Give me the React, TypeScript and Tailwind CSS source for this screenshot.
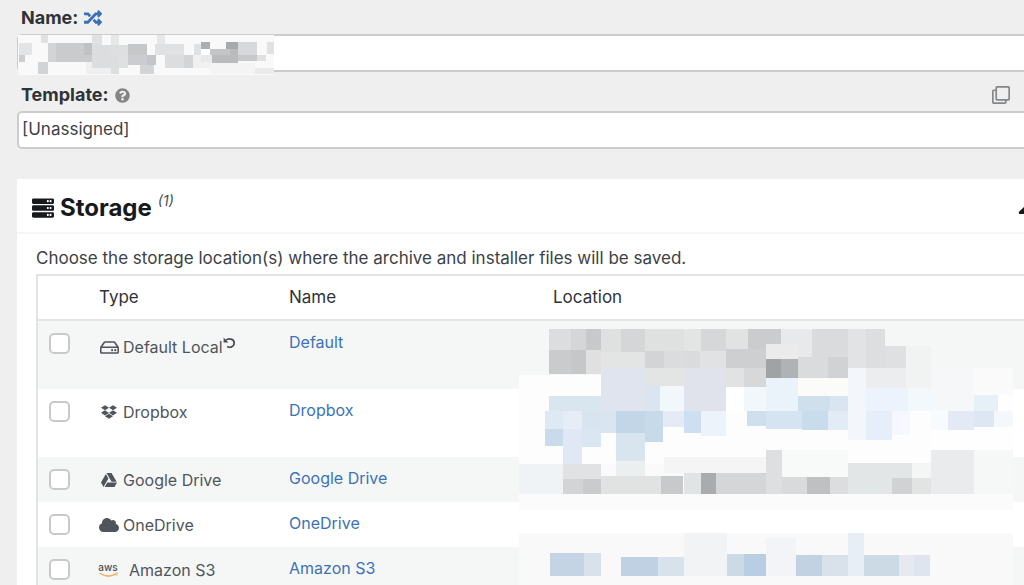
import React from 'react';
import {
  FaRandom,
  FaQuestionCircle,
  FaRegClone,
  FaServer,
  FaCaretUp,
  FaRegHdd,
  FaDropbox,
  FaGoogleDrive,
  FaCloud,
} from 'react-icons/fa';

type Block = [x: number, y: number, width: number, height: number, fill: string];

interface StorageItem {
  id: string;
  type: string;
  name: string;
  icon: React.ReactNode;
  tall?: boolean;
  isDefault?: boolean;
}

const AwsIcon: React.FC = () => (
  <svg viewBox="0 0 20 18" className="w-5 h-[18px] overflow-visible" aria-hidden="true">
    <text x="9" y="10" textAnchor="middle" fontSize="10" fontWeight="500" fill="#4a5159" fontFamily="Inter, sans-serif">
      aws
    </text>
    <path d="M1 12.4 Q9 17.4 16.5 13.2" fill="none" stroke="#f2ae70" strokeWidth="1.5" strokeLinecap="round" />
    <path d="M15.7 12.1 L18.4 12.1 L17.7 14.8" fill="none" stroke="#f2ae70" strokeWidth="1" />
  </svg>
);

const UndoIcon: React.FC = () => (
  <svg viewBox="0 0 13 12" className="w-[13px] h-3" aria-hidden="true">
    <path d="M3 3.2 C5 1.2 11.2 1.4 11.2 5.8 C11.2 10.2 6.6 11 4 9.6" fill="none" stroke="#4a4f55" strokeWidth="1.7" />
    <path d="M0.6 0.6 V5.4 H5.4 Z" fill="#4a4f55" />
  </svg>
);

const storages: StorageItem[] = [
  { id: 'local', type: 'Default Local', name: 'Default', icon: <FaRegHdd className="w-[19px] h-[17px]" />, tall: true, isDefault: true },
  { id: 'dropbox', type: 'Dropbox', name: 'Dropbox', icon: <FaDropbox className="w-4 h-4" />, tall: true },
  { id: 'gdrive', type: 'Google Drive', name: 'Google Drive', icon: <FaGoogleDrive className="w-4 h-4" /> },
  { id: 'onedrive', type: 'OneDrive', name: 'OneDrive', icon: <FaCloud className="w-5 h-4" /> },
  { id: 's3', type: 'Amazon S3', name: 'Amazon S3', icon: <AwsIcon /> },
];

// Obscured package name
const nameBlocks: Block[] = [
  [0, 0, 256, 40, '#f9f9f9'], [30, 8, 44, 19, '#d2d4d5'], [38, 8, 28, 19, '#c9cbcd'], [66, 8, 8, 12, '#bfc1c3'],
  [66, 20, 8, 7, '#c9cbcd'], [1, 8, 13, 12, '#e3e4e5'], [1, 20, 6, 7, '#cccecf'], [23, 0, 7, 8, '#e0e1e2'],
  [20, 27, 10, 12, '#d2d3d5'], [68, 27, 25, 12, '#efefef'], [74, 0, 10, 10, '#e0e1e2'], [74, 10, 19, 23, '#dcddde'],
  [93, 0, 8, 10, '#e6e7e7'], [93, 10, 17, 10, '#dedfe0'], [93, 20, 8, 19, '#dddede'], [101, 20, 9, 13, '#e0e0e1'],
  [110, 9, 19, 11, '#c5c7c9'], [110, 20, 19, 10, '#cbccd0'], [129, 20, 9, 10, '#c3c5c9'], [122, 30, 14, 9, '#d3d4d6'],
  [139, 0, 8, 9, '#e6e7e8'], [137, 9, 29, 11, '#e0e1e2'], [147, 20, 19, 13, '#dcddde'], [166, 20, 9, 13, '#d2d4d5'],
  [176, 9, 7, 11, '#e0e1e2'], [175, 20, 19, 13, '#f0f0f0'], [183, 7, 9, 7, '#abadaf'], [183, 14, 9, 6, '#ffffff'],
  [183, 20, 11, 7, '#e8e9e9'], [192, 14, 20, 6, '#c3c5c6'], [194, 20, 26, 8, '#b9bbbd'], [208, 7, 12, 7, '#a7aaab'],
  [212, 14, 8, 6, '#b8babb'], [220, 7, 19, 13, '#d6d9db'], [220, 20, 19, 6, '#c6c8c9'], [239, 20, 9, 6, '#dfe1e1'],
  [249, 7, 7, 12, '#e0e2e3'], [192, 28, 45, 11, '#f4f4f4'], [237, 33, 19, 6, '#eaeaea'],
];

// Obscured locations, measured from the table's first data row
const locationBlocks: Block[] = [
  [0, 46, 412, 89, '#fdfdfd'], [0, 165, 494, 20, '#fbfbfb'], [0, 181, 494, 23, '#ffffff'],
  [412, 59, 82, 76, '#fefefe'], [329, 39, 126, 43, '#f5f7f9'],
  // first line
  [30, 0, 22, 21, '#dcddde'], [52, 0, 15, 21, '#d5d6d7'], [67, 0, 15, 21, '#c8c9cb'], [82, 0, 20, 23, '#dfe0e0'],
  [102, 0, 24, 23, '#d5d6d7'], [126, 0, 39, 22, '#dfe0e0'], [165, 0, 17, 22, '#e3e4e4'], [182, 0, 25, 22, '#d5d7d8'],
  [207, 0, 22, 20, '#e1e3e3'], [229, 0, 33, 39, '#cbccce'], [30, 21, 22, 24, '#cacbcc'], [52, 21, 15, 24, '#c5c7c9'],
  [67, 21, 15, 24, '#e0e0e1'], [82, 23, 44, 16, '#e3e4e4'], [126, 22, 19, 17, '#d3d4d6'], [145, 22, 20, 17, '#dadcdd'],
  [165, 22, 16, 17, '#d9dbdd'], [181, 22, 26, 17, '#e1e2e3'], [207, 20, 40, 19, '#cecfd1'],
  [262, 0, 31, 28, '#e8e9ea'], [293, 0, 36, 39, '#dadbdd'], [329, 0, 18, 39, '#e1e3e4'], [347, 0, 19, 39, '#dddedf'],
  [366, 17, 21, 22, '#dfe0e2'], [387, 17, 25, 42, '#f1f3f3'], [247, 15, 32, 15, '#ebebec'], [247, 30, 15, 19, '#a0a3a6'],
  [262, 30, 17, 19, '#b0b3b5'], [279, 28, 30, 21, '#d9dbdd'], [309, 28, 20, 21, '#d0d2d4'],
  [82, 39, 44, 43, '#e0e4ee'], [126, 39, 39, 18, '#e3e4e4'], [165, 39, 42, 43, '#e0e3ec'], [207, 39, 18, 19, '#e1e3e3'],
  [225, 39, 22, 19, '#d7d8da'], [347, 39, 40, 20, '#ebedef'], [455, 39, 39, 27, '#fafafa'],
  // second line
  [126, 57, 15, 25, '#dae5f1'], [141, 57, 24, 25, '#f2f7fc'], [207, 58, 18, 24, '#ffffff'], [225, 58, 22, 24, '#f2f7fc'],
  [30, 67, 52, 15, '#d9e6ef'], [247, 49, 32, 33, '#eaf2fa'], [279, 49, 50, 18, '#fbfbfa'], [279, 67, 32, 15, '#cfdfec'],
  [311, 67, 18, 15, '#d9e6f1'], [329, 39, 18, 72, '#f3f6fb'], [347, 59, 42, 23, '#ecf3fc'], [389, 59, 23, 23, '#f2f8fc'],
  [455, 66, 24, 16, '#e6f0f7'], [26, 82, 18, 18, '#dfe9f4'], [44, 82, 19, 18, '#e6edf7'], [63, 82, 19, 18, '#d8e5f0'],
  [82, 82, 15, 22, '#d9e5f1'], [97, 82, 29, 22, '#c2d6e8'], [126, 82, 18, 31, '#c7daea'], [144, 82, 21, 16, '#e4ebf5'],
  [165, 82, 17, 22, '#cddff0'], [182, 82, 25, 25, '#edf3fa'], [228, 82, 19, 15, '#d0dfee'], [247, 82, 36, 18, '#d6e3f0'],
  [283, 82, 26, 19, '#c9dcec'], [309, 82, 20, 19, '#e1ecf7'], [347, 82, 26, 29, '#e6eefa'], [373, 82, 18, 24, '#f5f9ff'],
  [412, 82, 17, 19, '#f7fbff'], [429, 82, 26, 19, '#e3eaf5'], [455, 82, 20, 16, '#dce7f3'], [475, 82, 19, 16, '#f4f8fc'],
  [26, 100, 18, 17, '#c9daea'], [44, 100, 19, 35, '#dfe8f4'], [63, 100, 19, 18, '#dbe6f3'], [97, 104, 29, 28, '#d8e5ef'],
  // third line
  [0, 135, 44, 30, '#f0f3f5'], [44, 135, 38, 15, '#e1e2e3'], [44, 150, 20, 15, '#d2d4d6'], [64, 150, 18, 15, '#c9cbcd'],
  [82, 135, 165, 30, '#fafafa'], [97, 132, 29, 15, '#ecefef'], [82, 147, 60, 18, '#e1e3e3'], [145, 128, 102, 16, '#f5f5f5'],
  [142, 147, 22, 18, '#c7c9ca'], [165, 144, 17, 21, '#e1e4e5'], [182, 144, 15, 21, '#a9acae'], [197, 144, 50, 21, '#d4d6d8'],
  [247, 121, 16, 44, '#dddfe0'], [263, 121, 66, 27, '#f8f9f9'], [263, 148, 25, 17, '#d8dadc'], [288, 148, 23, 17, '#bec0c2'],
  [311, 148, 18, 17, '#dbdddf'], [329, 134, 64, 31, '#e3e6e6'], [373, 149, 20, 16, '#d0d2d3'], [393, 134, 19, 15, '#f4f5f5'],
  [393, 149, 19, 16, '#e2e4e4'], [412, 121, 43, 44, '#e9ebed'], [455, 121, 39, 44, '#f6f8f8'],
  // last line
  [0, 204, 494, 53, '#f9f9f9'], [31, 224, 34, 23, '#c4d4e4'], [65, 224, 17, 23, '#d9e2ec'], [102, 228, 37, 19, '#bfd1e2'],
  [139, 228, 26, 19, '#d7e2ea'], [165, 204, 43, 43, '#f2f3f5'], [208, 225, 17, 22, '#ccdae6'], [225, 225, 22, 22, '#b9cee3'],
  [247, 209, 30, 38, '#f3f4f7'], [277, 226, 26, 21, '#c2d2e3'], [303, 226, 26, 21, '#d9e2eb'], [329, 204, 16, 43, '#e8eef5'],
  [345, 226, 35, 21, '#ccdae6'], [380, 226, 15, 21, '#e6e9ef'], [395, 226, 16, 21, '#dee5ee'],
];

const Mosaic: React.FC<{ blocks: Block[]; width: number; height: number; className: string }> = ({
  blocks,
  width,
  height,
  className,
}) => (
  <svg
    width={width}
    height={height}
    shapeRendering="crispEdges"
    className={`absolute pointer-events-none max-w-none ${className}`}
    aria-hidden="true"
  >
    {blocks.map(([x, y, w, h, fill], i) => (
      <rect key={i} x={x} y={y} width={w} height={h} fill={fill} />
    ))}
  </svg>
);

const StorageRow: React.FC<{ item: StorageItem }> = ({ item }) => (
  <tr className={`align-top odd:bg-[#f5f7f7] ${item.tall ? 'h-[68px]' : 'h-[45px]'}`}>
    <td className="pl-[11px] pt-3">
      <input
        type="checkbox"
        aria-label={item.name}
        className="block appearance-none w-[21px] h-[21px] bg-white border-2 border-[#c8c9cb] rounded-[5px]"
      />
    </td>
    <td className={item.isDefault ? 'pt-3.5' : 'pt-[11px]'}>
      <div className="flex items-center gap-1 leading-6 text-[#50555b]">
        <span className={`flex justify-center w-5 ${item.id === 's3' ? 'mr-1.5' : ''}`}>{item.icon}</span>
        <span>{item.type}</span>
        {item.isDefault && (
          <span className="-ml-1 mb-2">
            <UndoIcon />
          </span>
        )}
      </div>
    </td>
    <td className="pt-[9px]">
      <a href={`#${item.id}`} className="leading-6 text-[#3d72b5]">
        {item.name}
      </a>
    </td>
    <td />
  </tr>
);

const App: React.FC = () => {
  return (
    <div className="h-screen overflow-hidden bg-[#efefef] font-['Inter',sans-serif] text-base text-[#3c4146]">
      <form className="pl-[17px] pt-1.5">
        <div className="flex items-center gap-1.5 h-6 pl-1">
          <label htmlFor="package-name" className="text-lg font-bold text-[#2f3338]">
            Name:
          </label>
          <button type="button" aria-label="Toggle a default name" className="text-[#3a70b5]">
            <FaRandom className="w-[18px] h-[18px]" />
          </button>
        </div>
        <div className="relative mt-1 -mr-2">
          <input
            id="package-name"
            type="text"
            className="block w-full h-[38px] px-1 bg-white border-2 border-[#cbcccd] rounded-[5px]"
          />
          <Mosaic blocks={nameBlocks} width={256} height={40} className="left-px top-px" />
        </div>

        <div className="flex items-center gap-1.5 h-6 pl-1 pr-3.5 mt-[11px]">
          <label htmlFor="template" className="text-lg font-bold text-[#2f3338]">
            Template:
          </label>
          <FaQuestionCircle className="w-[15px] h-[15px] text-[#858585]" />
          <button type="button" aria-label="Copy template" className="ml-auto text-[#85878a]">
            <FaRegClone className="w-[18px] h-[18px]" />
          </button>
        </div>
        <div className="mt-1 -mr-2">
          <select
            id="template"
            className="block appearance-none w-full h-[38px] px-[3px] bg-white border-2 border-[#cbcccd] rounded-[5px] text-[17px] text-[#3c4146]"
          >
            <option>[Unassigned]</option>
          </select>
        </div>

        <section className="mt-[30px] bg-white">
          <header className="flex items-center h-[55px] pl-[15px] pt-1 border-b-2 border-[#f5f5f5] text-[#17191c]">
            <FaServer className="w-[22px] h-[22px]" />
            <h2 className="ml-1.5 text-2xl font-bold">Storage</h2>
            <sup className="ml-1.5 text-sm italic text-[#4a4d50]">(1)</sup>
            <button type="button" aria-label="Collapse storage" className="ml-auto -mr-4">
              <FaCaretUp className="w-6 h-8" />
            </button>
          </header>
          <div className="pl-[19px] pt-3">
            <p className="text-[17px] leading-6">
              Choose the storage location(s) where the archive and installer files will be saved.
            </p>
            <div className="relative mt-1">
              <table className="table-fixed w-full border-2 border-r-0 border-[#e2e3e4] border-separate border-spacing-0">
                <colgroup>
                  <col className="w-[61px]" />
                  <col className="w-[190px]" />
                  <col className="w-[264px]" />
                  <col />
                </colgroup>
                <thead>
                  <tr className="h-[45px] text-left text-[17px] text-[#2f3338]">
                    <th className="border-b-2 border-[#e2e3e4]" />
                    <th className="font-normal border-b-2 border-[#e2e3e4]">Type</th>
                    <th className="font-normal border-b-2 border-[#e2e3e4]">Name</th>
                    <th className="font-normal border-b-2 border-[#e2e3e4]">Location</th>
                  </tr>
                </thead>
                <tbody>
                  {storages.map(item => (
                    <StorageRow key={item.id} item={item} />
                  ))}
                </tbody>
              </table>
              <Mosaic blocks={locationBlocks} width={494} height={257} className="left-[483px] top-[55px]" />
            </div>
          </div>
        </section>
      </form>
    </div>
  );
};

export default App;
